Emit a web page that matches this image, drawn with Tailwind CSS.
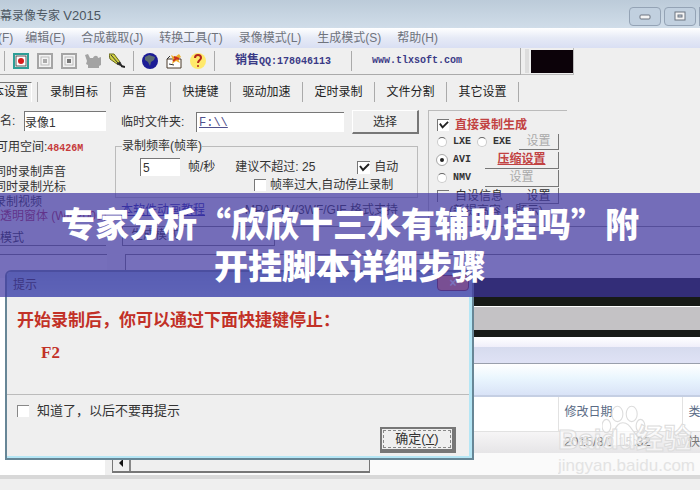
<!DOCTYPE html>
<html lang="zh-CN">
<head>
    <meta charset="UTF-8">
    <meta name="viewport" content="width=device-width, initial-scale=1.0">
    <title>屏幕录像专家 V2015</title>
    <script src="https://cdn.jsdelivr.net/npm/@tailwindcss/browser@4"></script>
</head>
<body class="overflow-hidden bg-[#efefef] text-xs leading-4 text-[#333] font-['Liberation_Sans','Noto_Sans_CJK_SC',sans-serif]">
    <div class="relative min-h-screen overflow-hidden">
        <!-- Recorder window, runs past the left edge -->
        <div class="-ml-3">
            <header class="flex h-7 items-center justify-between bg-linear-to-b from-[#bccbd9] to-[#d0dde9]">
                <span class="pt-1 text-[#4b5560]">屏幕录像专家 <span class="text-[13px]">V2015</span></span>
                <div class="flex gap-[3px] pt-1">
                    <button aria-label="最小化" class="flex h-[19px] w-8 items-center justify-center rounded-sm border border-[#94a3b5] bg-[#c1d0df]">
                        <svg class="h-3 w-3" viewBox="0 0 12 12"><rect x="1" y="5" width="10" height="4" rx="1" fill="#f4f4f4" stroke="#6c7480"/></svg>
                    </button>
                    <button aria-label="最大化" class="flex h-[19px] w-8 items-center justify-center rounded-sm border border-[#94a3b5] bg-[#c1d0df]">
                        <svg class="h-3 w-3" viewBox="0 0 12 12"><rect x="1" y="2" width="10" height="8" fill="#f4f4f4" stroke="#6c7480"/><rect x="4" y="5" width="4" height="2" fill="#c1d0df" stroke="#6c7480"/></svg>
                    </button>
                    <span class="h-[19px] w-[1px] bg-[#94a3b5]"></span>
                </div>
            </header>

            <nav class="flex h-5 items-center gap-4 bg-linear-to-b from-white via-[#e6eaf6] to-[#d9dff3] pl-[10px] whitespace-nowrap text-[#6f737c]">
                <span class="-mr-1">(F)</span>
                <span>编辑(E)</span>
                <span>合成截取(J)</span>
                <span>转换工具(T)</span>
                <span>录像模式(L)</span>
                <span>生成模式(S)</span>
                <span>帮助(H)</span>
            </nav>

            <!-- Toolbar -->
            <div class="flex h-[27px]">
                <div class="flex w-[533px] items-center border-r border-b border-[#aaa] pl-4">
                    <span class="mr-2 h-5 w-[1px] bg-[#aaa]"></span>
                    <div class="flex items-center gap-2">
                        <svg class="h-4 w-4" viewBox="0 0 16 16"><rect x="1" y="1" width="14" height="14" fill="#fff" stroke="#2d9e97" stroke-width="2"/><rect x="3" y="3" width="10" height="10" fill="none" stroke="#555"/><circle cx="8" cy="8" r="3" fill="#d81b1b"/></svg>
                        <svg class="h-4 w-4" viewBox="0 0 16 16"><rect x="1" y="1" width="14" height="14" fill="#f3f3f3" stroke="#a5a5a5" stroke-width="2"/><rect x="4" y="4" width="8" height="8" fill="none" stroke="#bbb"/><rect x="6" y="6" width="4" height="4" fill="#aaa"/></svg>
                        <svg class="h-4 w-4" viewBox="0 0 16 16"><rect x="1" y="1" width="14" height="14" fill="#f3f3f3" stroke="#a5a5a5" stroke-width="2"/><rect x="4" y="4" width="8" height="8" fill="none" stroke="#bbb"/><rect x="6" y="6" width="4" height="4" fill="#777"/></svg>
                        <svg class="h-4 w-4" viewBox="0 0 16 16"><path d="M0 2l3-1 2 4h3c1-3 5-3 5 0l3-1v8l-2 1v2H3v-3L1 11l1-3z" fill="#a3a3a3"/></svg>
                        <svg class="h-4 w-4" viewBox="0 0 16 16"><path d="M0 1h5l6 8-3 2-7-5z" fill="#d3d345" stroke="#66661c"/><path d="M2 2l7 8M8 11l3-2 2 4z" fill="#222" stroke="#333"/><path d="M12 13l4 1" stroke="#222" stroke-width="2"/></svg>
                    </div>
                    <span class="mx-2 h-5 w-[1px] bg-[#aaa]"></span>
                    <div class="flex items-center gap-2">
                        <svg class="h-4 w-4" viewBox="0 0 16 16"><circle cx="8" cy="8" r="8" fill="#1c1c96"/><path d="M3 4l4-2 6 2-1 3-3 2-1 4-2-4-3-2z" fill="#5c6c70"/></svg>
                        <svg class="h-4 w-4" viewBox="0 0 16 16"><path d="M1 6h14v9H1z" fill="#fff" stroke="#4a3b2a"/><path d="M5 2l4 2 4-3 2 3-3 2 2 4-4-2-4 3 1-4z" fill="#eeb02d"/><path d="M8 4l5 2M7 8l4-3" stroke="#c8321d" stroke-width="2"/><path d="M1 6l3-3M3 11l5 1" stroke="#333"/></svg>
                        <svg class="h-4 w-4" viewBox="0 0 16 16"><circle cx="8" cy="8" r="8" fill="#ffe96b"/><path d="M5 5c0-4 6-4 6 0 0 2-3 2-3 5" fill="none" stroke="#b3261c" stroke-width="2"/><circle cx="8" cy="13" r="1" fill="#b3261c"/></svg>
                    </div>
                    <span class="mr-5 ml-2 h-5 w-[1px] bg-[#aaa]"></span>
                    <span class="text-xs whitespace-nowrap text-[#3a3a86] font-['Liberation_Mono','Noto_Sans_CJK_SC',monospace] font-bold">销售<span class="text-[10px]">QQ:178046113</span></span>
                    <span class="mx-5 h-5 w-[1px] bg-[#aaa]"></span>
                    <a href="#" class="text-[10px] font-bold text-[#3a3a86] font-['Liberation_Mono',monospace]">www.tlxsoft.com</a>
                </div>
                <div class="flex items-center border-r border-b border-[#bbb] pl-1">
                    <span class="mr-[2px] h-6 w-1 bg-[#ddd]"></span>
                    <span class="h-[23px] w-[42px] bg-[#0c0209]"></span>
                </div>
            </div>

            <!-- Tabs -->
            <div class="flex h-[33px] items-center whitespace-nowrap text-[#222]">
                <button class="h-5 w-11 border-t border-r border-[#777] border-r-white text-left pl-1">本设置</button>
                <span class="ml-[5px] h-5 w-[1px] bg-[#aaa]"></span>
                <button class="w-[72px]">录制目标</button>
                <span class="h-5 w-[1px] bg-[#aaa]"></span>
                <button class="w-[59px] pr-3">声音</button>
                <span class="h-5 w-[1px] bg-[#aaa]"></span>
                <button class="w-[59px]">快捷键</button>
                <span class="h-5 w-[1px] bg-[#aaa]"></span>
                <button class="w-[71px]">驱动加速</button>
                <span class="h-5 w-[1px] bg-[#aaa]"></span>
                <button class="w-[71px]">定时录制</button>
                <span class="h-5 w-[1px] bg-[#aaa]"></span>
                <button class="w-[71px]">文件分割</button>
                <span class="h-5 w-[1px] bg-[#aaa]"></span>
                <button class="w-[71px]">其它设置</button>
                <span class="h-5 w-[1px] bg-[#aaa]"></span>
            </div>

            <!-- Basic settings -->
            <main class="flex h-[118px] overflow-hidden whitespace-nowrap">
                <div class="w-[127px] pt-[3px]">
                    <div class="flex items-center pl-3">
                        <label for="name" class="w-6">名:</label>
                        <input id="name" value="录像1" class="h-5 w-[82px] border-t border-l border-[#777] bg-white px-0">
                    </div>
                    <p class="mt-2 pl-2">可用空间:<span class="text-[10px] font-bold text-[#c63a3a] font-['Liberation_Mono',monospace]">48426M</span></p>
                    <p class="mt-2 pl-[6px] leading-[15px]">同时录制声音</p>
                    <p class="pl-[6px] leading-[15px]">同时录制光标</p>
                    <p class="pl-[6px] leading-[14px]">录制视频</p>
                    <p class="leading-[14px] text-[#b03050]">录透明窗体 (Win2000)</p>
                </div>
                <div class="mr-2 w-[305px]">
                    <div class="flex items-center pt-[2px] pl-[6px]">
                        <label for="dir" class="w-[75px]">临时文件夹:</label>
                        <input id="dir" value="F:\\" class="h-5 w-[148px] border-t border-l border-[#777] bg-white pl-[2px] text-[#50508c] underline font-['Liberation_Mono',monospace]">
                        <button class="ml-2 h-6 w-[67px] border border-[#fff] border-r-2 border-b-2 border-r-[#777] border-b-[#777]">选择</button>
                    </div>
                    <fieldset class="mt-1 h-[60px] w-[303px] border border-[#bbb]">
                        <legend class="ml-[6px] h-4">录制频率(帧率)</legend>
                        <div class="mt-[3px] flex h-5 items-center">
                            <input id="fps" value="5" class="ml-6 h-[18px] w-10 border-t border-l border-[#777] bg-white pl-[2px]">
                            <label for="fps" class="ml-2">帧/秒</label>
                            <span class="ml-5 w-[122px]">建议不超过: 25</span>
                            <label class="flex items-center gap-1"><input type="checkbox" checked class="peer hidden"><svg class="h-[13px] w-[13px] border-t border-l border-[#777] bg-white" viewBox="0 0 12 12"><path d="M2 4l3 4 6-6" fill="none" stroke="#222" stroke-width="2"/></svg>自动</label>
                        </div>
                        <label class="ml-[138px] flex items-center gap-1"><input type="checkbox" class="h-3 w-3 appearance-none border-t border-l border-[#777] bg-white">帧率过大,自动停止录制</label>
                    </fieldset>
                    <div class="mt-1 flex gap-10 pl-[6px]">
                        <a href="#" class="text-[#2222a0] underline">本软件动画教程</a>
                        <span>MPA/FLV/3WF/GIF 格式支持</span>
                    </div>
                </div>
                <div class="mt-[2px] h-[118px] w-[139px] border-t border-l border-[#bbb] pt-[6px] pl-2">
                    <label class="flex h-4 items-center gap-[6px] font-bold text-[#c24242]"><input type="checkbox" checked class="hidden"><svg class="h-3 w-3 border-t border-l border-[#777] bg-white" viewBox="0 0 12 12"><path d="M2 4l3 4 6-6" fill="none" stroke="#222" stroke-width="2"/></svg>直接录制生成</label>
                    <div class="flex h-[18px] items-center gap-[6px] text-[10px] font-bold font-['Liberation_Mono','Noto_Sans_CJK_SC',monospace]">
                        <label class="flex items-center gap-[6px]"><input type="radio" name="type" class="h-[10px] w-[10px] appearance-none rounded-full border border-[#ccc] border-t-[#666] bg-white">LXE</label>
                        <label class="flex items-center gap-[6px]"><input type="radio" name="type" class="h-[10px] w-[10px] appearance-none rounded-full border border-[#ccc] border-t-[#666] bg-white">EXE</label>
                        <button class="mr-2 ml-auto h-4 w-10 border-r border-b border-[#777] text-xs font-normal text-[#aaa]">设置</button>
                    </div>
                    <div class="flex h-[18px] items-center text-[10px] font-bold font-['Liberation_Mono','Noto_Sans_CJK_SC',monospace]">
                        <label class="flex items-center gap-[6px]"><input type="radio" name="type" checked class="h-[10px] w-[10px] appearance-none rounded-full border-[3px] border-white bg-[#222] outline outline-[#aaa]">AVI</label>
                        <button class="mr-2 ml-auto h-[17px] w-[74px] border-r border-b border-[#777] text-xs text-[#c24242] underline">压缩设置</button>
                    </div>
                    <div class="flex h-[18px] items-center text-[10px] font-bold font-['Liberation_Mono','Noto_Sans_CJK_SC',monospace]">
                        <label class="flex items-center gap-[6px]"><input type="radio" name="type" class="h-[10px] w-[10px] appearance-none rounded-full border border-[#ccc] border-t-[#666] bg-white">NMV</label>
                        <button class="mr-2 ml-auto h-[17px] w-[74px] border-r border-b border-[#777] text-xs font-normal text-[#aaa]">设置</button>
                    </div>
                    <div class="flex h-[18px] items-center">
                        <label class="flex items-center gap-[6px]"><input type="checkbox" class="h-3 w-3 appearance-none border-t border-l border-[#777]">自设信息</label>
                        <button class="mr-2 ml-auto h-4 w-10 border-r border-b border-[#777]">设置</button>
                    </div>
                    <p class="pl-3 leading-3">(新提高容 1-题示)</p>
                </div>
            </main>

            <div class="flex h-7">
                <div class="mr-4 mb-2 flex w-[118px] items-center border-b border-[#777] pt-1 pl-3">模式</div>
                <div class="mb-2 w-[153px] border border-[#777] pl-2">生成模式</div>
                <div class="flex-1 border-t border-[#888]"></div>
            </div>
            <div class="flex h-6">
                <div class="mr-[18px] w-[119px] border-t border-[#777] bg-[#f6f6f6]"></div>
                <div class="flex-1 border-t border-l border-[#777] bg-[#f6f6f6]"></div>
            </div>

            <!-- Preview strip and file list -->
            <div class="flex">
                <div class="w-[117px] bg-white"></div>
                <div class="ml-[7px] min-w-0 flex-1">
                    <div class="h-7 bg-[#171a17]"></div>
                    <div class="h-6 border-t border-white bg-[#c4c2c5]"></div>
                    <div class="h-[7px] bg-[#171a17]"></div>
                    <div class="h-[10px] bg-linear-to-b from-white to-[#f0effa]"></div>
                    <div class="h-[17px] border-b border-[#999fac] bg-linear-to-b from-[#d6dbee] to-[#dfe2f5]"></div>
                    <div class="h-[33px] border-b-2 border-[#c5cfe3] bg-linear-to-b from-white via-[#eaf6fe] via-45% to-[#d9e3f7]"></div>
                    <table class="w-full table-fixed bg-white whitespace-nowrap">
                        <thead>
                            <tr class="h-[34px] border-b border-[#e2e2e2] text-[#5a6b85]">
                                <th class="border-r border-[#e2e2e2]"></th>
                                <th class="w-[124px] border-r border-[#e2e2e2] pb-1 pl-[6px] text-left font-normal">修改日期</th>
                                <th class="w-[18px] overflow-hidden pb-1 pl-[6px] text-left font-normal">类</th>
                            </tr>
                        </thead>
                        <tbody>
                            <tr class="h-[22px] bg-linear-to-b from-[#f7f6f7] to-[#e6e5e7] text-[#777]">
                                <td></td>
                                <td class="pl-[6px] text-[13px]">2015/8/1 15:32</td>
                                <td class="overflow-hidden pl-[6px]">快</td>
                            </tr>
                        </tbody>
                    </table>
                    <div class="flex h-[22px] bg-[#fafafa]">
                        <div class="flex h-5 w-[258px] items-end border-r border-b-2 border-l border-[#777] bg-[#efefef]">
                            <button aria-label="向左滚动" class="flex h-4 w-[18px] items-center justify-center border-r-2 border-[#888]">
                                <svg class="h-2 w-2" viewBox="0 0 8 8"><path d="M6 0v8L2 4z" fill="#111"/></svg>
                            </button>
                        </div>
                    </div>
                </div>
            </div>
            <footer class="h-[15px] border-t-4 border-[#d8d8d8] bg-[#efefef]"></footer>
        </div>

        <!-- Watermark -->
        <div class="absolute top-[404px] right-0 w-[142px] overflow-hidden whitespace-nowrap">
            <svg class="absolute top-0 left-11 h-11 w-11 fill-white/70 stroke-[#ddd]" viewBox="0 0 40 40"><ellipse cx="14" cy="9" rx="5" ry="7"/><ellipse cx="27" cy="9" rx="5" ry="7"/><ellipse cx="4" cy="20" rx="4" ry="6"/><ellipse cx="35" cy="20" rx="4" ry="6"/><path d="M19 17c6 0 8 7 13 12 3 6-2 10-7 9-4-1-7-1-11 0-6 1-10-4-6-9 4-5 5-12 11-12z"/></svg>
            <p class="relative pt-5 text-[28px] leading-8 font-bold text-white/50 [-webkit-text-stroke:1px_#dcdcdc]">Baidu经验</p>
            <p class="relative text-[17px] leading-5 text-[#e3e3e3]">jingyan.baidu.com</p>
        </div>

        <!-- Hint dialog -->
        <section class="absolute top-[270px] left-[5px] flex h-[190px] w-[469px] flex-col rounded-t-md border-2 border-[#678696] bg-[#efefef] shadow-[inset_-3px_-2px_0_#b5e6f5]">
            <div class="flex h-[25px] items-center justify-between rounded-t-sm bg-linear-to-b from-[#90b8d8] to-[#a8d0ea] pr-[3px] pl-[6px]">
                <h2>提示</h2>
                <button aria-label="关闭" class="mb-1 h-4 w-8 rounded-b-sm border border-[#803040] bg-[#ff8a70] leading-3 font-bold text-white">×</button>
            </div>
            <div class="mr-[3px] h-[98px] border-b border-[#bbb] pt-[14px] pl-[10px] text-[17px] leading-5 font-bold text-[#c23127] font-['Liberation_Serif','Noto_Sans_CJK_SC',serif]">
                <p>开始录制后，你可以通过下面快捷键停止：</p>
                <p class="mt-3 pl-6">F2</p>
            </div>
            <label class="flex items-center gap-2 pt-[6px] pl-[10px] text-[13px] leading-5"><input type="checkbox" class="h-3 w-3 appearance-none border-t border-l border-[#888] bg-white">知道了，以后不要再提示</label>
            <button class="mt-[6px] mr-4 h-[26px] w-[76px] self-end border-2 border-[#777] border-r-4 border-b-4 p-[1px] text-[13px] leading-4"><span class="block border border-dashed border-[#888] leading-4">确定(<u>Y</u>)</span></button>
        </section>

        <!-- Headline banner -->
        <div class="absolute inset-x-0 top-[193px] bg-[#4036a3]/70 pt-[9px] pb-[11px]">
            <h1 class="mx-auto max-w-[600px] text-center text-[34px] leading-[42px] font-black text-white font-['Noto_Sans_CJK_SC',sans-serif]">专家分析“欣欣十三水有辅助挂吗”附开挂脚本详细步骤</h1>
        </div>
    </div>
</body>
</html>
